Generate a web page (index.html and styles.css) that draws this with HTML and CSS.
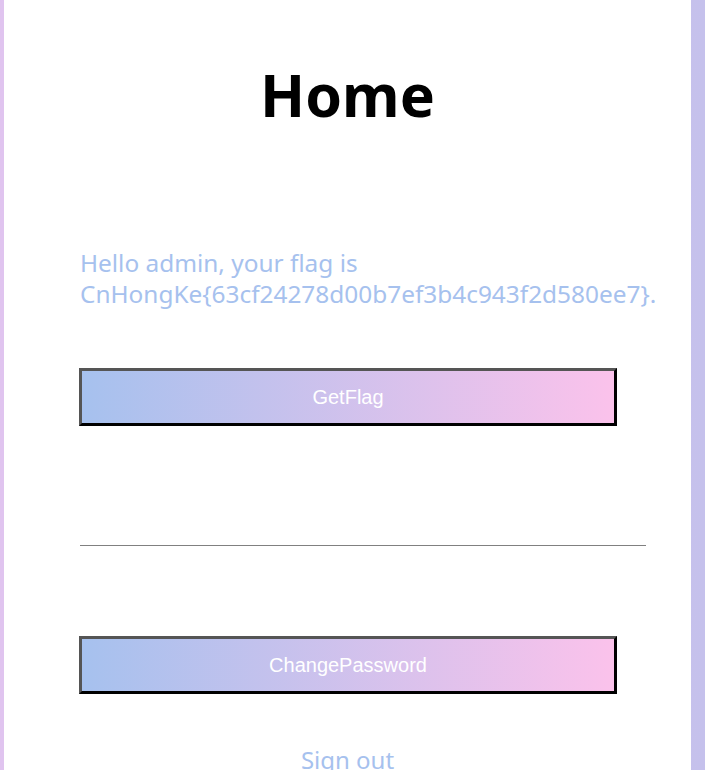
FILE: index.html
```html
<!DOCTYPE html>
<html lang="en">
<head>
<meta charset="utf-8">
<title>Home</title>
<link rel="stylesheet" href="styles.css">
</head>
<body>
<div class="page">
  <main class="card">
    <h1 class="title">Home</h1>
    <p class="msg">Hello admin, your flag is CnHongKe{63cf24278d00b7ef3b4c943f2d580ee7}.</p>
    <button class="btn btn-first" type="button">GetFlag</button>
    <hr class="divider">
    <button class="btn btn-second" type="button">ChangePassword</button>
    <a class="signout" href="#">Sign out</a>
  </main>
</div>
</body>
</html>
```
FILE: styles.css
```css
html, body {
  margin: 0;
  padding: 0;
  height: 100%;
}
body {
  background: linear-gradient(to right, #e0c4ef, #c5c1ec);
  font-family: "Noto Sans", "Open Sans", sans-serif;
  overflow: hidden;
}
.page {
  display: flex;
  padding: 0 14px 0 4px;
  min-height: 100vh;
}
.card {
  flex: 1;
  background: #ffffff;
  display: flex;
  flex-direction: column;
  align-items: flex-start;
}
.title {
  align-self: stretch;
  text-align: center;
  margin: 54px 0 0 0;
  font-size: 59px;
  line-height: 80px;
  font-weight: 700;
  color: #000;
}
.msg {
  margin: 113px 45px 0 76px;
  width: 566px;
  font-size: 24.4px;
  line-height: 31px;
  color: #a6c1ee;
}
.btn {
  margin: 59px 0 0 75px;
  width: 538px;
  height: 58px;
  box-sizing: border-box;
  border-style: solid;
  border-width: 3px;
  border-color: #555 #000 #000 #555;
  background: linear-gradient(to right, #a6c1ee, #fbc2eb);
  color: #fff;
  font-family: "Liberation Sans", Arial, sans-serif;
  font-size: 20px;
  padding: 0;
}
.btn-second {
  margin-top: 90px;
}
.divider {
  align-self: stretch;
  margin: 119px 45px 0 76px;
  border: 0;
  border-top: 1px solid #808080;
  height: 0;
}
.signout {
  align-self: stretch;
  text-align: center;
  margin-top: 50px;
  font-size: 24px;
  line-height: 31px;
  color: #a6c1ee;
  text-decoration: none;
}
```
